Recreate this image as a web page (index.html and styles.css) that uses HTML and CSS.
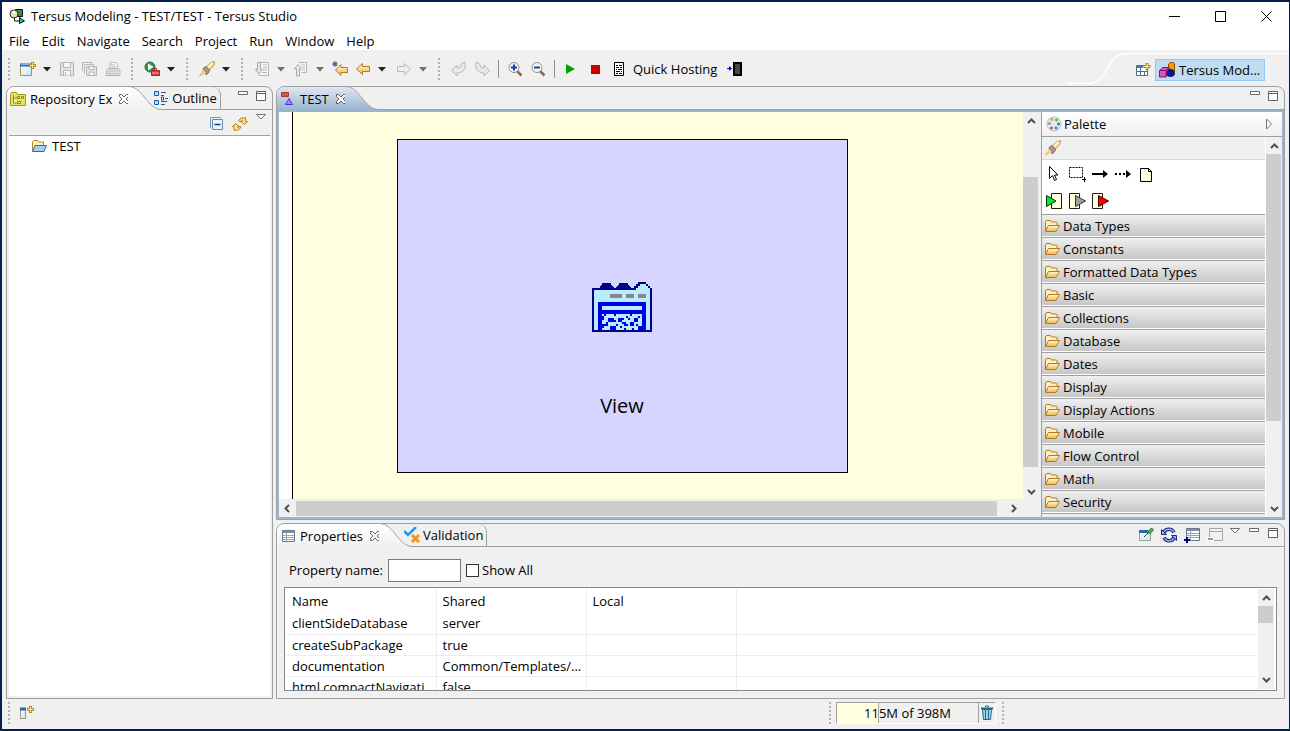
FILE: index.html
```html
<!DOCTYPE html>
<html lang="en">
<head>
<meta charset="utf-8">
<title>Tersus Modeling - TEST/TEST - Tersus Studio</title>
<link rel="stylesheet" href="styles.css">
</head>
<body>
<svg class="defs" aria-hidden="true">
  <defs>
    <linearGradient id="gold" x1="0" y1="0" x2="0" y2="1"><stop offset="0" stop-color="#fff8dc"/><stop offset="1" stop-color="#f0b840"/></linearGradient>
    <linearGradient id="tabLight" x1="0" y1="0" x2="0" y2="1"><stop offset="0" stop-color="#ffffff"/><stop offset="1" stop-color="#f0f0f0"/></linearGradient>
    <linearGradient id="tabBlue" x1="0" y1="0" x2="0" y2="1"><stop offset="0" stop-color="#dfe8f2"/><stop offset="1" stop-color="#99b4d1"/></linearGradient>
    <linearGradient id="sky" x1="0" y1="0" x2="1" y2="1"><stop offset="0" stop-color="#ffffff"/><stop offset="1" stop-color="#c4e2f8"/></linearGradient>
  </defs>
  <symbol id="folder" viewBox="0 0 16 16"><path d="M1.500 13V4l1-1.500h4l1 1.500h5l.5.500V7" fill="#fff0c0" stroke="#b87820"/><path d="M1.500 13.500L4.500 7.500h11L12 13.500z" fill="url(#gold)" stroke="#b87820"/></symbol>
  <symbol id="down" viewBox="0 0 8 5"><path d="M0 0h8L4 4.500z"/></symbol>
  <symbol id="close" viewBox="0 0 12 12"><path d="M1.500 1.500h2L6 4l2.500-2.500h2v2L8 6l2.500 2.500v2h-2L6 8l-2.500 2.500h-2v-2L4 6 1.500 3.500z" fill="#fff" stroke="#606060"/></symbol>
  <symbol id="min" viewBox="0 0 12 12"><path d="M1.500 1.500h9v3h-9z" fill="#fff" stroke="#686868"/></symbol>
  <symbol id="max" viewBox="0 0 12 12"><path d="M1.500 1.500h9v9h-9zM1 3.500h10" fill="#fff" stroke="#606060"/></symbol>
  <symbol id="tri" viewBox="0 0 12 12"><path d="M1.500 1.500h9L6 6z" fill="#fff" stroke="#707070"/></symbol>
  <symbol id="rocket" viewBox="0 0 16 16"><path d="M7 6l5-4.500 3.500-1L15 4l-5 5.500z" fill="#fbd08a" stroke="#c89850"/><path d="M9 6.500l4.500-4.500" stroke="#fff6d8" stroke-width="2"/><path d="M4.500 7L7 5.500 10.500 9 9.500 12l-2.500 2v-3L4 9z" fill="#a49a94" stroke="#8c6c50"/><path d="M4.500 9L.5 15l6-3.500" fill="#ffe060" stroke="#e8b868"/></symbol>
  <symbol id="up-arrow" viewBox="0 0 9 7"><path d="M1 5l3.500-3.500L8 5" fill="none" stroke="#505050" stroke-width="2"/></symbol>
  <symbol id="down-arrow" viewBox="0 0 9 7"><path d="M1 2l3.500 3.500L8 2" fill="none" stroke="#505050" stroke-width="2"/></symbol>
  <symbol id="left-arrow" viewBox="0 0 7 9"><path d="M5 1L1.500 4.500 5 8" fill="none" stroke="#505050" stroke-width="2"/></symbol>
  <symbol id="right-arrow" viewBox="0 0 7 9"><path d="M2 1l3.500 3.500L2 8" fill="none" stroke="#505050" stroke-width="2"/></symbol>
  <symbol id="nav" viewBox="0 0 16 16"><path d="M1.500 8L7.500 2.500v3h7v5h-7v3z"/></symbol>
</svg>

<div class="window">
  <header class="titlebar">
    <svg class="i16" viewBox="0 0 16 16"><path d="M6.500 1.500h7v7h-7z" fill="#2f8a55" stroke="#111"/><circle cx="5" cy="6" r="4" fill="#e8e4a0" stroke="#222"/><path d="M4 3l2 2" stroke="#fff" stroke-width="2"/><path d="M5.500 10v3H10" fill="none" stroke="#111"/><path d="M10.500 9.500l5 3.500-5 2.500z" fill="#28c0a0" stroke="#111"/></svg>
    <h1>Tersus Modeling - TEST/TEST - Tersus Studio</h1>
    <div class="caption">
      <button aria-label="Minimize"><svg width="11" height="11" viewBox="0 0 11 11"><path d="M0 5.500h11" stroke="#000"/></svg></button>
      <button aria-label="Maximize"><svg width="11" height="11" viewBox="0 0 11 11"><path d="M.5.500h10v10H.5z" fill="none" stroke="#000"/></svg></button>
      <button aria-label="Close"><svg width="11" height="11" viewBox="0 0 11 11"><path d="M.5.500l10 10M10.500.5l-10 10" stroke="#000"/></svg></button>
    </div>
  </header>

  <nav class="menubar">
    <button>File</button><button>Edit</button><button>Navigate</button><button>Search</button><button>Project</button><button>Run</button><button>Window</button><button>Help</button>
  </nav>

  <div class="toolbar">
    <span class="grip"></span>
    <button class="tool" aria-label="New"><svg class="i16" viewBox="0 0 16 16"><path d="M.5 3.500h11v11H.5z" fill="url(#sky)" stroke="#b09050"/><path d="M0 4h11" stroke="#2b66b0" stroke-width="3"/><path d="M1 3.500h9" stroke="#80b8f0"/><path d="M12.500 1v7M9 4.500h7" stroke="#b08a10" stroke-width="3"/><path d="M12.500 2v5M10 4.500h5" stroke="#fff0a0"/></svg></button>
    <button class="drop" aria-label="New menu"><svg><use href="#down"/></svg></button>
    <button class="tool" aria-label="Save" disabled><svg class="i16" viewBox="0 0 16 16"><path d="M1.500 1.500h13v13h-13z" fill="#e4e4e4" stroke="#b4b4b4"/><path d="M4.500 1.500h7v5h-7zM4.500 14.500v-5h7v5M6.500 11v3" fill="#f6f6f6" stroke="#b4b4b4"/></svg></button>
    <button class="tool" aria-label="Save All" disabled><svg class="i16" viewBox="0 0 16 16"><path d="M.5 10.500v-9h9v2M2.500 12.500v-9h9v2" fill="none" stroke="#b8b8b8"/><path d="M4.500 5.500h10v9h-10z" fill="#e6e6e6" stroke="#b4b4b4"/><path d="M7 5.500h5v3H7zM7 14v-3h5v3" fill="#f8f8f8" stroke="#b4b4b4"/></svg></button>
    <button class="tool" aria-label="Print" disabled><svg class="i16" viewBox="0 0 16 16"><path d="M4.500 7.500l1-6h5l2 2v4" fill="#f8f8f8" stroke="#b8b8b8"/><path d="M6 4h4M6 6h5" stroke="#b8b8b8"/><path d="M1.500 14.500v-5l2-2h10l1.500 2v5z" fill="#e0e0e0" stroke="#b4b4b4"/><path d="M3 10h10M3 12.500h10" stroke="#c4c4c4"/></svg></button>
    <span class="grip"></span>
    <button class="tool" aria-label="Run external tools"><svg class="i16" viewBox="0 0 16 16"><circle cx="6" cy="6" r="5" fill="#35924e" stroke="#247340"/><path d="M4 2.500L9.500 6 4 9.500z" fill="#fff"/><path d="M9.500 9V7.500h3V9" fill="none" stroke="#a02020"/><path d="M7.500 9.500h8v5h-8z" fill="#d44040" stroke="#a82424"/><path d="M8 12h7" stroke="#ffb0a0"/></svg></button>
    <button class="drop" aria-label="External tools menu"><svg><use href="#down"/></svg></button>
    <span class="grip"></span>
    <button class="tool" aria-label="Search"><svg class="i16"><use href="#rocket"/></svg></button>
    <button class="drop" aria-label="Search menu"><svg><use href="#down"/></svg></button>
    <span class="grip"></span>
    <button class="tool" aria-label="Next annotation" disabled><svg class="i16" viewBox="0 0 16 16"><path d="M6.500 1.500h8v13h-10" fill="#f6f6f6" stroke="#b4b4b4"/><path d="M9 4h4M9 6.500h4M9 9h4M8 11.500h5" stroke="#b8b8b8"/><path d="M3.500 1.500h3v7h2L5 13 1.500 8.500h2z" fill="#e8e8e4" stroke="#a8a8a8"/></svg></button>
    <button class="drop dim" aria-label="Next annotation menu"><svg><use href="#down"/></svg></button>
    <button class="tool" aria-label="Previous annotation" disabled><svg class="i16" viewBox="0 0 16 16"><path d="M5.500 1.500h8v10h-5" fill="#f6f6f6" stroke="#b4b4b4"/><path d="M8 4h4M9 6.500h3M9 9h3" stroke="#b8b8b8"/><path d="M3.500 15h3V8h2L5 3.500 1.500 8h2z" fill="#e8e8e4" stroke="#a8a8a8"/></svg></button>
    <button class="drop dim" aria-label="Previous annotation menu"><svg><use href="#down"/></svg></button>
    <button class="tool" aria-label="Last edit location"><svg class="i16" viewBox="0 0 16 16"><path d="M3.500 9L9 3.500v3h6.500v5H9v3z" fill="url(#gold)" stroke="#b87820"/><path d="M3 0v6M0 3h6M1 1l4 4M5 1L1 5" stroke="#28548c"/></svg></button>
    <button class="tool" aria-label="Back"><svg class="i16" fill="url(#gold)" stroke="#b87820"><use href="#nav"/></svg></button>
    <button class="drop" aria-label="Back menu"><svg><use href="#down"/></svg></button>
    <button class="tool shifted" aria-label="Forward" disabled><svg class="i16 flip" fill="#eeeeea" stroke="#b8b8b4"><use href="#nav"/></svg></button>
    <button class="drop dim" aria-label="Forward menu"><svg><use href="#down"/></svg></button>
    <span class="grip"></span>
    <button class="tool" aria-label="Undo" disabled><svg class="i16" viewBox="0 0 16 16"><path d="M.5 9.500L6 4v3c3 0 4-1 4-3.500L13.500 1c2 5 0 11-7.500 11v3z" fill="#e8e8e4" stroke="#b8b8b4"/></svg></button>
    <button class="tool" aria-label="Redo" disabled><svg class="i16 flip" viewBox="0 0 16 16"><path d="M.5 9.500L6 4v3c3 0 4-1 4-3.500L13.500 1c2 5 0 11-7.500 11v3z" fill="#e8e8e4" stroke="#b8b8b4"/></svg></button>
    <span class="sep"></span>
    <button class="tool" aria-label="Zoom in"><svg class="i16" viewBox="0 0 16 16"><path d="M10 10l4.500 4.500" stroke="#8c6a50" stroke-width="2.500"/><circle cx="7" cy="6.500" r="5" fill="#eef6fc" stroke="#a08c70"/><path d="M4 6.500h6M7 3.500v6" stroke="#2438a8" stroke-width="2"/></svg></button>
    <button class="tool" aria-label="Zoom out"><svg class="i16" viewBox="0 0 16 16"><path d="M10 10l4.500 4.500" stroke="#8c6a50" stroke-width="2.500"/><circle cx="7" cy="6.500" r="5" fill="#eef6fc" stroke="#a08c70"/><path d="M4 6.500h6" stroke="#2438a8" stroke-width="2"/></svg></button>
    <span class="sep"></span>
    <button class="tool" aria-label="Start"><svg class="i16" viewBox="0 0 16 16"><path d="M3 3l9 5-9 5z" fill="#00a400"/></svg></button>
    <button class="tool shifted" aria-label="Stop"><svg class="i16" viewBox="0 0 16 16"><path d="M3 4h9v9H3z" fill="#c80000"/></svg></button>
    <button class="tool hosting"><svg class="i16" viewBox="0 0 16 16"><path d="M3.500 1.500h9v13h-9z" fill="#fff" stroke="#000"/><path d="M5 4.500h2M8 4.500h3M5 6.500h3M9 6.500h2M5 8.500h1M7 8.500h4M5 10.500h4M10 10.500h1M5 12.500h2M8 12.500h3" stroke="#000"/></svg>Quick Hosting</button>
    <button class="tool" aria-label="Mobile"><svg class="i16" viewBox="0 0 16 16"><path d="M0 7.500h4" stroke="#0000d8"/><path d="M2 5l3 2.500L2 10z" fill="#0000d8"/><path d="M7 2h7v12H7z" fill="#484848" stroke="#000" stroke-width="2"/></svg></button>
    <div class="perspectives">
      <svg class="swoosh" width="64" height="32" viewBox="0 0 64 32"><path d="M0 30.500h22C42 30 38 .5 60 .5h4" fill="none" stroke="#fff" stroke-width="1.500"/></svg>
      <div class="switcher">
        <button class="tool" aria-label="Open perspective"><svg class="i16" viewBox="0 0 16 16"><path d="M1.500 3.500h11v10h-11z" fill="#fff" stroke="#506c8c"/><path d="M2 5h6" stroke="#4080b8" stroke-width="2"/><path d="M5.500 6v8M1 9.500h12M9.500 9v5" stroke="#506c8c"/><path d="M12 1v7M8.500 4.500h7" stroke="#b08a30" stroke-width="3"/><path d="M12 2v5M9.500 4.500h5" stroke="#fff0a0"/></svg></button>
        <button class="persp"><svg class="i16" viewBox="0 0 16 16"><path d="M9.500 2l2-1.500h3l1 1.500v11h-6z" fill="#f09a10" stroke="#8c5000"/><path d="M.5 8.500L4 5.500h6v6L7 15H.5z" fill="#e850c8" stroke="#801860"/><path d="M.5 8.500H7V15M7 8.500l3-3" fill="none" stroke="#801860"/><circle cx="11.500" cy="11" r="4" fill="#001890"/></svg>Tersus Mod...</button>
      </div>
    </div>
  </div>

  <main class="workbench">
    <section class="panel explorer">
      <div class="tabs">
        <button class="tab active"><svg class="i16" viewBox="0 0 16 16"><path d="M.5 3.500l1-2h5l1 2h8v11H.5z" fill="#e8e458" stroke="#a09820"/><path d="M3.500 4v8H7M3.500 7H7M7.500 5.500h2v2h-2zM7.500 10.500h3v2h-3zM11.500 5.500h2v2h-2z" fill="#f4f2b0" stroke="#8c8430"/></svg>Repository Ex<svg class="x"><use href="#close"/></svg></button>
        <svg class="curve" viewBox="0 0 34 24"><path d="M0 .5C8 .5 12 6 17 12s9 11.500 17 11.500V24H0z" fill="url(#tabLight)"/><path d="M0 .5C8 .5 12 6 17 12s9 11.500 17 11.500" fill="none" stroke="#a0a0a0"/></svg>
        <button class="tab other"><svg class="i16" viewBox="0 0 16 16"><path d="M1.500 1.500h4v4h-4zM1.500 10.500h4v4h-4z" fill="#b8e0ff" stroke="#1860a0"/><path d="M8 2.500h5M8 5.500h3M8 11.500h6M8 14.500h4M12 8.500h3" stroke="#285888"/><path d="M8.500 7h2v3h-2z" fill="#fff" stroke="#285888"/></svg>Outline</button>
        <div class="winctl"><button aria-label="Minimize view"><svg><use href="#min"/></svg></button><button aria-label="Maximize view"><svg><use href="#max"/></svg></button></div>
      </div>
      <div class="viewbar">
        <button class="tool" aria-label="Collapse all"><svg class="i16" viewBox="0 0 16 16"><path d="M1.500 12V1.500H12" fill="none" stroke="#7898b8"/><path d="M3.500 3.500h10v10h-10z" fill="#e8f4ff" stroke="#6888a8"/><path d="M5.500 8.500h6" stroke="#104080" stroke-width="1.500"/></svg></button>
        <button class="tool" aria-label="Link with editor"><svg class="i16" viewBox="0 0 16 16"><path d="M6.500 4.500L10 1.500l1.500 1L13 1l1 4.500h1.500l-3 3-3.500-3 1.500-.500-1-.5L8 6z" fill="#ffe080" stroke="#b87c10"/><path d="M9 11.500L5.500 14.500l-1.500-1L2.500 15l-1-4.500H.5l3-3L7 10.500l-1.500.500 1 .5L8 10z" fill="#ffe080" stroke="#b87c10"/></svg></button>
        <button class="mini" aria-label="View menu"><svg><use href="#tri"/></svg></button>
      </div>
      <ul class="tree">
        <li><svg class="i16" viewBox="0 0 16 16"><path d="M1.500 13V3.500l1-1h4l1 1.500h5V7" fill="#fff0b0" stroke="#b88830"/><path d="M1.500 13.500L4 7.500h11.500L13 13.500z" fill="#a8ccf4" stroke="#3868a8"/></svg>TEST</li>
      </ul>
    </section>

    <div class="column">
      <section class="panel editor">
        <div class="tabs">
          <button class="tab active"><svg class="i16" viewBox="0 0 16 16"><path d="M1.500 1.500h7v4h-7z" fill="#d05848" stroke="#a83830"/><path d="M5.500 13.500h7L9 7.500z" fill="#a088ff" stroke="#5030e0"/></svg>TEST<svg class="x"><use href="#close"/></svg></button>
          <svg class="curve" viewBox="0 0 34 24"><path d="M0 .5C8 .5 12 6 17 12s9 11.500 17 11.500V24H0z" fill="url(#tabBlue)"/><path d="M0 .5C8 .5 12 6 17 12s9 11.500 17 11.500" fill="none" stroke="#a0a0a0"/></svg>
          <div class="winctl"><button aria-label="Minimize editor"><svg><use href="#min"/></svg></button><button aria-label="Maximize editor"><svg><use href="#max"/></svg></button></div>
        </div>
        <div class="editor-body">
          <div class="diagram">
            <div class="canvas">
              <div class="node">
                <svg width="60" height="50" viewBox="0 0 30 25" shape-rendering="crispEdges">
                  <path d="M0 3h4V2h.5V1.500H5V.5h4.500v1h.5v.500h.5V2.500h.5V3h1V2.500h.5V2h.5V1.500h.5V.5h4.500v1h.5v.500h.5v.500h.5V3H21V2h1V1h1V0h4v1h1v1h1v1h1v22H0z" fill="#000088"/>
                  <path d="M1 4h21V3h1V2h1V1h3v1h1v1h1v21H1z" fill="#b8ecff"/>
                  <path d="M9 6h6v2H9zM17 6h4v2h-4zM23 6h4v2h-4z" fill="#888"/>
                  <path d="M3 10h24v14H3z" fill="#0000e8"/><path d="M5 12h20v2H5z" fill="#b8ecff"/>
                  <path d="M5 16h20v8H5z" fill="#b8ecff"/>
                  <path d="M6 16h1v1H6zM11 16h1v1h-1zM5 17h1v1H5zM8 18h3v2H8zM10 19h2v1h-2zM7 20h1v2H7zM5 21h2v1H5zM5 18h1v1H5zM9 22h3v2H9zM12 21h1v1h-1zM5 22h1v1H5zM13 18h3v1h-3zM13 19h2v1h-2zM15 20h2v1h-2zM16 21h2v1h-2zM14 22h1v1h-1zM16 23h1v1h-1zM17 17h1v1h-1zM18 18h1v1h-1zM19 16h1v1h-1zM23 17h1v1h-1zM21 18h2v2h-2zM19 20h2v2h-2zM22 21h1v1h-1zM23 22h2v2h-2zM20 23h1v1h-1z" fill="#0000e8"/>
                </svg>
                <span>View</span>
              </div>
            </div>
            <div class="vscroll"><svg><use href="#up-arrow"/></svg><div class="track"><i class="thumb"></i></div><svg><use href="#down-arrow"/></svg></div>
            <div class="hscroll"><svg><use href="#left-arrow"/></svg><i class="thumb"></i><svg><use href="#right-arrow"/></svg></div>
          </div>
          <aside class="palette">
            <div class="palette-head"><svg class="i16" viewBox="0 0 16 16"><circle cx="8" cy="8" r="7" fill="#dceafa" stroke="#a8c0e0"/><g stroke-width="1"><circle cx="6" cy="3.500" r="1" fill="#ffd820" stroke="#c8a000"/><circle cx="10.500" cy="4" r="1" fill="#b0e020" stroke="#70a000"/><circle cx="3.500" cy="7.500" r="1" fill="#ff9020" stroke="#e07800"/><circle cx="12.500" cy="8" r="1" fill="#40b040" stroke="#208020"/><circle cx="5.500" cy="12" r="1" fill="#f07070" stroke="#d03030"/><circle cx="10" cy="12" r="1" fill="#70a0f0" stroke="#3060c0"/></g></svg><span>Palette</span><button aria-label="Collapse palette"><svg width="8" height="12" viewBox="0 0 8 12"><path d="M1.500 1v10l5-5z" fill="#fff" stroke="#707070"/></svg></button></div>
            <div class="palette-main">
              <div class="palette-list">
                <div class="palette-bar"><svg class="i16"><use href="#rocket"/></svg></div>
                <div class="palette-tools">
                  <button aria-label="Select"><svg viewBox="0 0 18 18"><path d="M4.500 1.500v12l3-3 2 5 2-1-2-4.500H13z" fill="#fff" stroke="#000"/></svg></button>
                  <button aria-label="Marquee"><svg viewBox="0 0 18 18"><path d="M1.500 2.500h13v10h-13z" fill="none" stroke="#000" stroke-dasharray="2 1"/><path d="M14 14.500h4M16.500 12v5" stroke="#000"/></svg></button>
                  <button aria-label="Flow"><svg viewBox="0 0 18 18"><path d="M1 9h12" stroke="#000" stroke-width="2"/><path d="M12 5l5 4-5 4z"/></svg></button>
                  <button aria-label="Dashed flow"><svg viewBox="0 0 18 18"><path d="M1 9h11" stroke="#000" stroke-width="2" stroke-dasharray="2 2"/><path d="M12 5l5 4-5 4z"/></svg></button>
                  <button aria-label="Note"><svg viewBox="0 0 18 18"><path d="M3.500 3.500h8l3 3v10h-11z" fill="#ffffe0" stroke="#000"/><path d="M11.500 3v3.500H15" fill="none" stroke="#000"/></svg></button>
                  <button aria-label="Trigger"><svg viewBox="0 0 18 18"><path d="M6.500 1.500h10v15h-10z" fill="#ffffe0" stroke="#202010"/><path d="M1.500 3.500v11L11 9z" fill="#00f020" stroke="#082808"/></svg></button>
                  <button aria-label="Input"><svg viewBox="0 0 18 18"><path d="M1.500 1.500h10v15h-10z" fill="#ffffe0" stroke="#202010"/><path d="M7.500 3.500v11l10-5.500z" fill="#a0a0a0" stroke="#303030"/></svg></button>
                  <button aria-label="Error"><svg viewBox="0 0 18 18"><path d="M1.500 1.500h10v15h-10z" fill="#ffffe0" stroke="#202010"/><path d="M7.500 3.500v11l10-5.500z" fill="#ff0000" stroke="#300000"/></svg></button>
                </div>
                <button class="drawer"><svg class="i16"><use href="#folder"/></svg>Data Types</button>
                <button class="drawer"><svg class="i16"><use href="#folder"/></svg>Constants</button>
                <button class="drawer"><svg class="i16"><use href="#folder"/></svg>Formatted Data Types</button>
                <button class="drawer"><svg class="i16"><use href="#folder"/></svg>Basic</button>
                <button class="drawer"><svg class="i16"><use href="#folder"/></svg>Collections</button>
                <button class="drawer"><svg class="i16"><use href="#folder"/></svg>Database</button>
                <button class="drawer"><svg class="i16"><use href="#folder"/></svg>Dates</button>
                <button class="drawer"><svg class="i16"><use href="#folder"/></svg>Display</button>
                <button class="drawer"><svg class="i16"><use href="#folder"/></svg>Display Actions</button>
                <button class="drawer"><svg class="i16"><use href="#folder"/></svg>Mobile</button>
                <button class="drawer"><svg class="i16"><use href="#folder"/></svg>Flow Control</button>
                <button class="drawer"><svg class="i16"><use href="#folder"/></svg>Math</button>
                <button class="drawer"><svg class="i16"><use href="#folder"/></svg>Security</button>
                <div class="drawer-end"></div>
              </div>
              <div class="vscroll"><svg><use href="#up-arrow"/></svg><div class="track"><i class="thumb"></i></div><svg><use href="#down-arrow"/></svg></div>
            </div>
          </aside>
        </div>
      </section>

      <section class="panel properties">
        <div class="tabs">
          <button class="tab active"><svg class="i16" viewBox="0 0 16 16"><path d="M2.500 2.500h12v11h-12z" fill="#fff" stroke="#687888"/><path d="M3 4h11" stroke="#8090a8" stroke-width="2"/><path d="M6.500 5v8M3 7.500h11M3 9.500h11M3 11.500h11" stroke="#90a8c0"/></svg>Properties<svg class="x"><use href="#close"/></svg></button>
          <svg class="curve" viewBox="0 0 34 24"><path d="M0 .5C8 .5 12 6 17 12s9 11.500 17 11.500V24H0z" fill="url(#tabLight)"/><path d="M0 .5C8 .5 12 6 17 12s9 11.500 17 11.500" fill="none" stroke="#a0a0a0"/></svg>
          <button class="tab other"><svg class="i16" viewBox="0 0 16 16"><path d="M0 4l4 4 8-8" fill="none" stroke="#18a0f0" stroke-width="2.500"/><path d="M8 8l7 7M15 8l-7 7" stroke="#ff9010" stroke-width="3"/></svg>Validation</button>
          <div class="actions">
            <button class="tool" aria-label="Pin"><svg class="i16" viewBox="0 0 16 16"><path d="M1.500 4.500h11v9h-11z" fill="url(#sky)" stroke="#90a890"/><path d="M1 4.500h9" stroke="#2868b0" stroke-width="3"/><path d="M6 10l4-4" stroke="#404040"/><path d="M9.500 5l2 2 4-4-2-2z" fill="#50b060" stroke="#207030"/></svg></button>
            <button class="tool" aria-label="Refresh"><svg class="i16" viewBox="0 0 16 16"><path d="M3 6.500C3.500 1 11 1 13 5.500M13 9.500c-.5 5.500-8 5.500-10 1" fill="none" stroke="#202c80" stroke-width="3.500"/><path d="M3 6.500C3.500 1 11 1 13 5.500M13 9.500c-.5 5.500-8 5.500-10 1" fill="none" stroke="#98a8f8" stroke-width="1.500"/><path d="M.5 2.500v5h5zM15.500 13.500v-5h-5z" fill="#98a8f8" stroke="#202c80"/></svg></button>
            <button class="tool" aria-label="Add property"><svg class="i16" viewBox="0 0 16 16"><path d="M2.500 1.500h13v12h-13z" fill="#fff" stroke="#687888"/><path d="M3 3h12" stroke="#8090a8" stroke-width="2"/><path d="M6.500 4v9M3 6.500h12M3 8.500h12M3 10.500h12" stroke="#90a8c0"/><path d="M0 13h6M3 10v6" stroke="#000080" stroke-width="2"/></svg></button>
            <button class="tool" aria-label="Remove property" disabled><svg class="i16" viewBox="0 0 16 16"><path d="M2.500 1.500h13v12h-13z" fill="#f0f0f0" stroke="#a8a8a8"/><path d="M3 4.500h12" stroke="#a8a8a8"/><path d="M.5 10.500h6v3h-6z" fill="#989898" stroke="#fff"/></svg></button>
          </div>
          <div class="winctl"><button aria-label="View menu"><svg><use href="#tri"/></svg></button><button aria-label="Minimize view"><svg><use href="#min"/></svg></button><button aria-label="Maximize view"><svg><use href="#max"/></svg></button></div>
        </div>
        <form class="filter">
          <label for="pname">Property name:</label><input type="text" id="pname">
          <input type="checkbox" id="all"><label for="all">Show All</label>
        </form>
        <div class="grid">
          <table>
            <thead><tr><th>Name</th><th>Shared</th><th>Local</th><th></th></tr></thead>
            <tbody>
              <tr><td>clientSideDatabase</td><td>server</td><td></td><td></td></tr>
              <tr><td>createSubPackage</td><td>true</td><td></td><td></td></tr>
              <tr><td>documentation</td><td>Common/Templates/...</td><td></td><td></td></tr>
              <tr><td>html.compactNavigati...</td><td>false</td><td></td><td></td></tr>
            </tbody>
          </table>
          <div class="vscroll"><svg><use href="#up-arrow"/></svg><div class="track"><i class="thumb"></i></div><svg><use href="#down-arrow"/></svg></div>
        </div>
      </section>
    </div>
  </main>

  <footer class="status">
    <span class="grip"></span>
    <button class="tool" aria-label="Show view"><svg class="i16" viewBox="0 0 16 16"><path d="M.5 3.500h5v10h-5z" fill="url(#sky)" stroke="#a09878"/><path d="M0 4h6" stroke="#2868b0" stroke-width="3"/><path d="M10.500 1v7M7 4.500h7" stroke="#b08a30" stroke-width="3"/><path d="M10.500 2v5M8 4.500h5" stroke="#fff8c0"/></svg></button>
    <div class="heap-area">
      <span class="grip"></span>
      <div class="heap"><span>115M of 398M</span><button aria-label="Run garbage collector"><svg class="i16" viewBox="0 0 16 16"><path d="M3.500 4.500h9l-1 10h-7z" fill="#a0d8e8" stroke="#206888"/><path d="M2 3.500h12" stroke="#206888" stroke-width="2"/><path d="M6.500 2V1h3v1M6.500 5v9M9.500 5v9" fill="none" stroke="#206888"/></svg></button></div>
      <span class="grip"></span>
    </div>
  </footer>
</div>
</body>
</html>
```
FILE: styles.css
```css
* { box-sizing: border-box; }
body {
  margin: 0;
  font: 13px/20px "Open Sans", "Noto Sans", sans-serif;
  color: #000;
}
button {
  font: inherit;
  color: inherit;
  border: 0;
  padding: 0;
  background: none;
  display: flex;
  align-items: center;
  white-space: nowrap;
}
svg { display: block; flex: none; }
.defs { position: absolute; width: 0; height: 0; }
.i16 { width: 16px; height: 16px; }
.flip { transform: scaleX(-1); }

.window {
  height: 100vh;
  display: flex;
  flex-direction: column;
  background: #f0f0f0;
  border: 2px solid #05204a;
  border-right-width: 1px;
}

.titlebar { display: flex; align-items: center; height: 28px; background: #fff; padding-left: 7px; flex: none; }
.titlebar h1 { margin: 0 0 0 6px; font-size: 13px; font-weight: 400; }
.caption { display: flex; margin-left: auto; }
.caption button { width: 46px; height: 28px; justify-content: center; }

.menubar { display: flex; gap: 12px; height: 20px; background: #fff; padding-left: 7px; flex: none; padding-top: 2px; }

.toolbar { display: flex; align-items: center; height: 36px; padding: 2px 0 0; flex: none; }
.grip {
  width: 16px;
  height: 22px;
  flex: none;
  background: repeating-linear-gradient(#b4b4b4 0 2px, transparent 2px 4px) center / 2px 100% no-repeat;
}
.toolbar > .grip:first-child, .status > .grip { width: 14px; }
.tool { width: 23px; height: 22px; justify-content: center; flex: none; }
.drop { width: 16px; height: 22px; justify-content: center; flex: none; fill: #202020; }
.drop svg { width: 8px; height: 5px; }
.dim { fill: #707070; }
.shifted { margin-left: 2px; }
.sep { width: 10px; height: 18px; flex: none; background: linear-gradient(#909090, #909090) center / 1px 100% no-repeat; }
.hosting { width: auto; gap: 6px; padding: 0 6px 0 4px; }
.perspectives { display: flex; align-items: center; margin-left: auto; height: 32px; }
.switcher { display: flex; align-items: center; height: 32px; border-top: 1px solid #fff; padding-right: 24px; gap: 1px; }
.persp { width: 110px; height: 22px; gap: 4px; padding-left: 3px; background: #c0dcf3; border: 1px solid #90c8f6; }

.workbench { flex: 1; min-height: 0; display: grid; grid-template-columns: 267px minmax(0, 1fr); gap: 3px; padding: 0 4px; }
.column { display: flex; flex-direction: column; gap: 3px; min-height: 0; }
.panel { display: flex; flex-direction: column; border: 1px solid #a0a0a0; border-radius: 8px 8px 0 0; min-height: 0; overflow: hidden; }
.editor { flex: 1; }
.properties { height: 176px; flex: none; }

.tabs { display: flex; height: 23px; flex: none; box-shadow: inset 0 -1px #a0a0a0; }
.tab { height: 23px; gap: 4px; padding-left: 3px; flex: none; }
.tab.active { background: linear-gradient(#fff, #f0f0f0); }
.tab .x { width: 12px; height: 12px; margin-left: 2px; }
.curve { width: 34px; height: 24px; margin: -1px -9px 0 -2px; }
.tab.other { border-right: 1px solid #a0a0a0; border-top-right-radius: 8px; padding: 0 3px 0 0; height: 22px; gap: 3px; }
.winctl { display: flex; gap: 6px; margin: 3px 5px 0 auto; height: 12px; }
.winctl svg, .mini svg { width: 12px; height: 12px; }
.actions { display: flex; margin-left: auto; }
.actions + .winctl { margin-left: 3px; gap: 7px; }

.viewbar { display: flex; justify-content: flex-end; height: 25px; padding: 3px 5px 0 0; flex: none; }
.mini { height: 12px; margin-left: 4px; }
.tree { flex: 1; margin: 0 2px 2px; padding: 0 0 0 22px; list-style: none; background: #fff; border-top: 1px solid #a0a0a0; }
.tree li { display: flex; align-items: center; gap: 5px; }

.editor .tab.active { background: linear-gradient(#dfe8f2, #99b4d1); }
.editor-body { flex: 1; min-height: 0; display: grid; grid-template-columns: minmax(0, 1fr) 241px; padding: 2px; background: #99b4d1; }
.diagram { display: grid; grid-template: minmax(0, 1fr) 18px / minmax(0, 1fr) 18px; background: #f0f0f0; }
.canvas { position: relative; background: #ffffe0; border-left: 1px solid #000; box-shadow: -13px 0 #fff; margin-left: 13px; }
.node {
  position: absolute;
  left: 104px;
  top: 27px;
  width: 451px;
  height: 334px;
  display: flex;
  flex-direction: column;
  align-items: center;
  gap: 60px;
  padding: 142px 1px 0 0;
  background: #d5d5ff;
  border: 1px solid #000;
  font-size: 20px;
  line-height: 28px;
}
.vscroll { display: flex; flex-direction: column; align-items: center; justify-content: space-between; width: 16px; padding: 6px 0; background: #f0f0f0; }
.vscroll svg { width: 9px; height: 7px; }
.track { flex: 1; width: 100%; margin: 4px 0; }
.thumb { display: block; background: #cdcdcd; }
.vscroll .thumb { width: 15px; height: 100%; }
.diagram .vscroll { padding-bottom: 4px; }
.diagram .vscroll .track { padding: 48px 0 17px; }
.hscroll { display: flex; align-items: center; gap: 5px; padding: 0 5px; height: 18px; }
.hscroll svg { width: 7px; height: 9px; }
.hscroll .thumb { flex: 1; height: 15px; margin-right: 8px; }
.diagram .hscroll { grid-column: 1 / 3; padding-right: 24px; }

.palette { display: flex; flex-direction: column; min-height: 0; background: #fff; border-left: 1px solid #a0a0a0; }
.palette-head { display: flex; align-items: center; gap: 2px; height: 25px; flex: none; padding: 0 9px 0 4px; background: linear-gradient(#fff, #f0f0f0); border-bottom: 1px solid #a0a0a0; }
.palette-head button { margin-left: auto; }
.palette-main { flex: 1; min-height: 0; display: flex; }
.palette-list { flex: 1; min-width: 0; overflow: hidden; }
.palette-bar { height: 23px; padding: 3px; background: #f0f0f0; border-bottom: 1px solid #d8d8d8; }
.palette-tools { display: grid; grid-template-columns: repeat(5, 23px); grid-auto-rows: 27px; height: 54px; padding-left: 3px; }
.palette-tools svg { width: 18px; height: 18px; }
.drawer { width: 100%; height: 23px; gap: 3px; padding: 1px 2px; background: linear-gradient(#f0f0f0, #c6c6c6); border-top: 1px solid #a0a0a0; border-bottom: 1px solid #fff; }
.drawer-end { height: 20px; border-top: 1px solid #a0a0a0; background: #ededed; }
.palette .vscroll { margin-left: 1px; padding-bottom: 5px; }
.palette .vscroll .track { padding-bottom: 80px; }

.filter { display: flex; align-items: center; height: 24px; margin: 11px 0 5px 12px; flex: none; }
.filter input[type="text"] { width: 73px; height: 23px; margin: 0 5px 0 5px; border: 1px solid #7a7a7a; background: #fff; font: inherit; }
.filter input[type="checkbox"] { appearance: none; width: 13px; height: 13px; margin: 0 3px 0 0; border: 1px solid #333; background: #fff; }
.grid { flex: 1; min-height: 0; display: flex; overflow: hidden; margin: 0 7px 7px; padding: 1px; background: #fff; border: 1px solid #828790; }
.grid table { flex: 1; height: 108px; width: 100%; table-layout: fixed; border-collapse: collapse; }
.grid th, .grid td { height: 21px; padding: 0 6px; line-height: 20px; text-align: left; font-weight: 400; white-space: nowrap; overflow: hidden; border-right: 1px solid #ececf0; border-bottom: 1px solid #ececf0; }
.grid th { height: 24px; width: 150px; border-bottom: 0; }
.grid th:last-child { width: auto; }
.grid th:last-child, .grid td:last-child { border-right: 0; }
.grid .vscroll { margin: 0 1px; height: 100%; }
.grid .track .thumb { height: 17px; }

.status { display: flex; height: 30px; padding: 3px 0 0; flex: none; }
.heap-area { display: flex; margin-left: auto; padding-right: 280px; }
.heap-area .grip { width: 13px; }
.heap { display: flex; width: 160px; height: 22px; border: 1px solid #a0a0a0; border-right-color: #fff; border-bottom-color: #fff; background: linear-gradient(90deg, #ffffe0 41px, #a0a0a0 41px 42px, transparent 42px); }
.heap span { flex: 1; text-align: center; }
.heap button { width: 17px; border-left: 1px solid #a0a0a0; }
```
